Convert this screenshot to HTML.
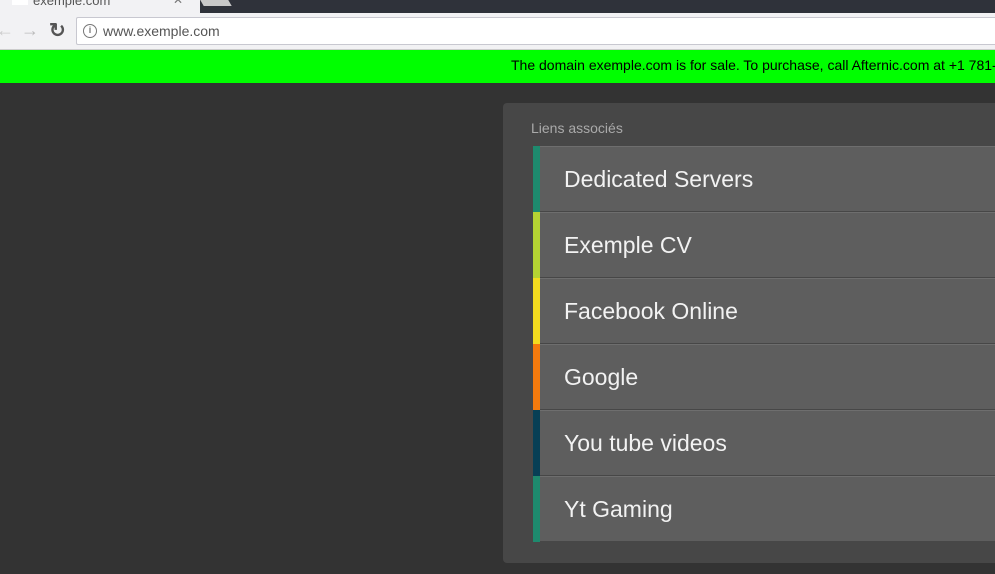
<!DOCTYPE html>
<html><head><style>
*{margin:0;padding:0;box-sizing:border-box}
body{width:995px;height:574px;overflow:hidden;background:#333;font-family:"Liberation Sans",sans-serif;position:relative}
.tabs{position:absolute;left:0;top:0;width:995px;height:13px;background:#2f323a;overflow:hidden}
.tab{position:absolute;left:0;top:0;width:200px;height:13px;background:#f2f2f4;overflow:hidden}
.tab2{position:absolute;left:202px;top:0;width:28px;height:6px;background:#c8c8c8;transform:skewX(30deg)}
.tb{position:absolute;left:0;top:13px;width:995px;height:37px;background:#f2f2f4;border-bottom:1px solid #ccc;overflow:hidden}
.url{position:absolute;left:76px;top:4px;width:919px;height:28px;background:#fff;border:1px solid #c8c8d0;border-right:none;border-radius:2px 0 0 2px;font-size:14px;color:#555;line-height:26px;padding-left:26px}
.green{position:absolute;left:0;top:50px;width:995px;height:33px;background:#00ff00;font-size:14px;line-height:37px;color:#000;white-space:nowrap;overflow:hidden}
.panel{position:absolute;left:503px;top:103px;width:492px;height:460px;background:#474747;border-radius:4px 0 0 4px;overflow:hidden}
.lbl{position:absolute;left:28px;top:17px;color:#aaa;font-size:14px}
.it{position:absolute;left:30px;width:462px;height:65px;background:#5e5e5e;border-top:1px solid #6e6e6e;color:#f2f2f2;font-size:23px;line-height:64px;padding-left:31px;white-space:nowrap}
.it i{position:absolute;left:0;top:-1px;width:7px;height:66px}
</style></head><body>
<div class="tabs"><div class="tab"><span style="position:absolute;left:12px;top:-7px;width:16px;height:12px;background:#fff"></span><span style="position:absolute;left:33px;top:-7px;font-size:13px;color:#555">exemple.com</span><span style="position:absolute;left:173px;top:-7px;font-size:12px;color:#777">✕</span></div><div class="tab2"></div></div>
<div class="tb">
<span style="position:absolute;left:-4px;top:7px;color:#ccc;font-size:18px">←</span>
<span style="position:absolute;left:21px;top:7px;color:#bbb;font-size:18px">→</span>
<span style="position:absolute;left:49px;top:5px;color:#555;font-size:20px;font-weight:bold">↻</span>
<div class="url"><span style="position:absolute;left:6px;top:6px;width:14px;height:14px;border:1.5px solid #777;border-radius:50%;font-size:9px;line-height:11px;text-align:center;color:#777;font-weight:bold">i</span>www.exemple.com</div>
</div>
<div class="green"><span style="position:absolute;left:511px;top:-3px">The domain exemple.com is for sale. To purchase, call Afternic.com at +1 781-373-6847</span></div>
<div class="panel">
<div class="lbl">Liens associés</div>
<div class="it" style="top:43px"><i style="background:#1e8a6e"></i>Dedicated Servers</div>
<div class="it" style="top:109px"><i style="background:#b5d333"></i>Exemple CV</div>
<div class="it" style="top:175px"><i style="background:#f3dc1f"></i>Facebook Online</div>
<div class="it" style="top:241px"><i style="background:#f47a0d"></i>Google</div>
<div class="it" style="top:307px"><i style="background:#073f55"></i>You tube videos</div>
<div class="it" style="top:373px"><i style="background:#1e8a6e"></i>Yt Gaming</div>
</div>
</body></html>
